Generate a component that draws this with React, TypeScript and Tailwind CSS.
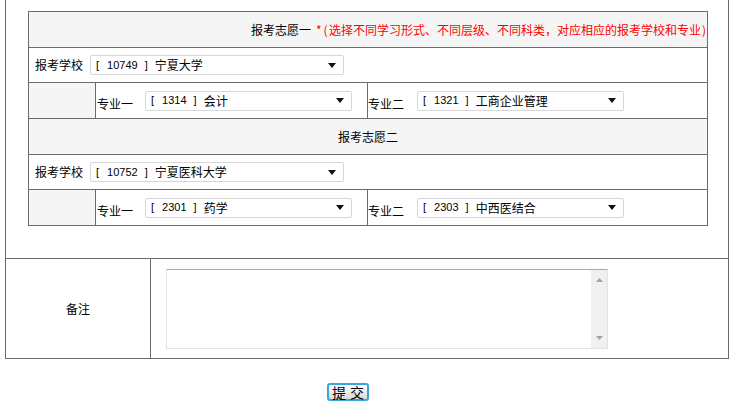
const font = { fontFamily: '"Noto Sans CJK SC", "Liberation Sans", sans-serif' };
const latin = { fontFamily: '"Liberation Sans", sans-serif' };

function FakeSelect({ code, name, width }: { code: string; name: string; width: string }) {
  return (
    <div
      className={`${width} h-[20px] flex items-center justify-between bg-white border border-[#d7d7d7] rounded-[2px] pl-[5px] pr-[7px] text-[12px] text-black shrink-0`}
    >
      <span className="flex items-center leading-none">
        <span className="text-[11px]" style={latin}>[</span>
        <span className="ml-[8px] text-[11px]" style={latin}>{code}</span>
        <span className="ml-[7px] text-[11px]" style={latin}>]</span>
        <span className="ml-[7px]">{name}</span>
      </span>
      <svg width="8" height="5" viewBox="0 0 8 5">
        <path d="M0 0h8L4 5z" fill="#111" />
      </svg>
    </div>
  );
}

function SchoolRow({ code, name }: { code: string; name: string }) {
  return (
    <div className="h-[35px] flex items-center border-t border-[#6b6b6b] pl-[6px]">
      <span className="w-[48px]">报考学校</span>
      <div className="ml-[7px]">
        <FakeSelect code={code} name={name} width="w-[254px]" />
      </div>
    </div>
  );
}

type Major = { code: string; name: string };

function MajorRow({ first, second }: { first: Major; second: Major }) {
  return (
    <div className="h-[36px] flex border-t border-[#6b6b6b]">
      <div className="w-[67px] bg-[#f5f5f5] border-r border-[#6b6b6b]" />
      <div className="w-[272px] flex items-center border-r border-[#6b6b6b] pl-[1px]">
        <span className="pt-[6px]">专业一</span>
        <div className="ml-[12px]">
          <FakeSelect code={first.code} name={first.name} width="w-[207px]" />
        </div>
      </div>
      <div className="flex-1 flex items-center">
        <span className="pt-[6px]">专业二</span>
        <div className="ml-[13px]">
          <FakeSelect code={second.code} name={second.name} width="w-[207px]" />
        </div>
      </div>
    </div>
  );
}

export default function App() {
  return (
    <div className="w-[735px] h-[404px] bg-white text-[12px] text-black overflow-hidden" style={font}>
      <div className="ml-[5px] w-[724px] border-x border-[#6b6b6b]">
        <div className="pt-[11px] pb-[32px] pl-[22px]">
          <div className="w-[680px] border border-[#6b6b6b]">
            <div className="h-[35px] flex items-center justify-end bg-[#f5f5f5]">
              <span className="mr-[5px]">报考志愿一</span>
              <span className="text-[#ff0000] flex items-center">
                <span className="inline-block w-[6px]">*</span>
                <span className="inline-block w-[7px] text-center">(</span>
                <span>选择不同学习形式、不同层级、不同科类，对应相应的报考学校和专业</span>
                <span className="inline-block w-[6px] text-center">)</span>
              </span>
            </div>
            <SchoolRow code="10749" name="宁夏大学" />
            <MajorRow first={{ code: '1314', name: '会计' }} second={{ code: '1321', name: '工商企业管理' }} />
            <div className="h-[36px] flex items-center justify-center bg-[#f5f5f5] border-t border-[#6b6b6b]">
              报考志愿二
            </div>
            <SchoolRow code="10752" name="宁夏医科大学" />
            <MajorRow first={{ code: '2301', name: '药学' }} second={{ code: '2303', name: '中西医结合' }} />
          </div>
        </div>
        <div className="h-[101px] flex border-y border-[#6b6b6b]">
          <div className="w-[145px] flex items-center justify-center border-r border-[#6b6b6b]">备注</div>
          <div className="flex-1 pl-[15px] pt-[10px]">
            <div className="w-[442px] h-[80px] flex border border-[#e3e3e3] border-t-[#a9a9a9] bg-white">
              <div className="flex-1" />
              <div className="w-[16px] bg-[#f0f0f0] flex flex-col items-center justify-between py-[8px]">
                <svg width="7" height="4" viewBox="0 0 7 4">
                  <path d="M0 4h7L3.5 0z" fill="#a3a3a3" />
                </svg>
                <svg width="7" height="4" viewBox="0 0 7 4">
                  <path d="M0 0h7L3.5 4z" fill="#a3a3a3" />
                </svg>
              </div>
            </div>
          </div>
        </div>
      </div>
      <div className="pt-[24px] pl-[327px]">
        <button className="w-[42px] h-[18px] flex items-center justify-center gap-[4px] rounded-[3px] border-2 border-[#3aa6dc] bg-gradient-to-b from-white to-[#d9d9d9] text-[14px] leading-none text-black">
          <span>提</span>
          <span>交</span>
        </button>
      </div>
    </div>
  );
}
